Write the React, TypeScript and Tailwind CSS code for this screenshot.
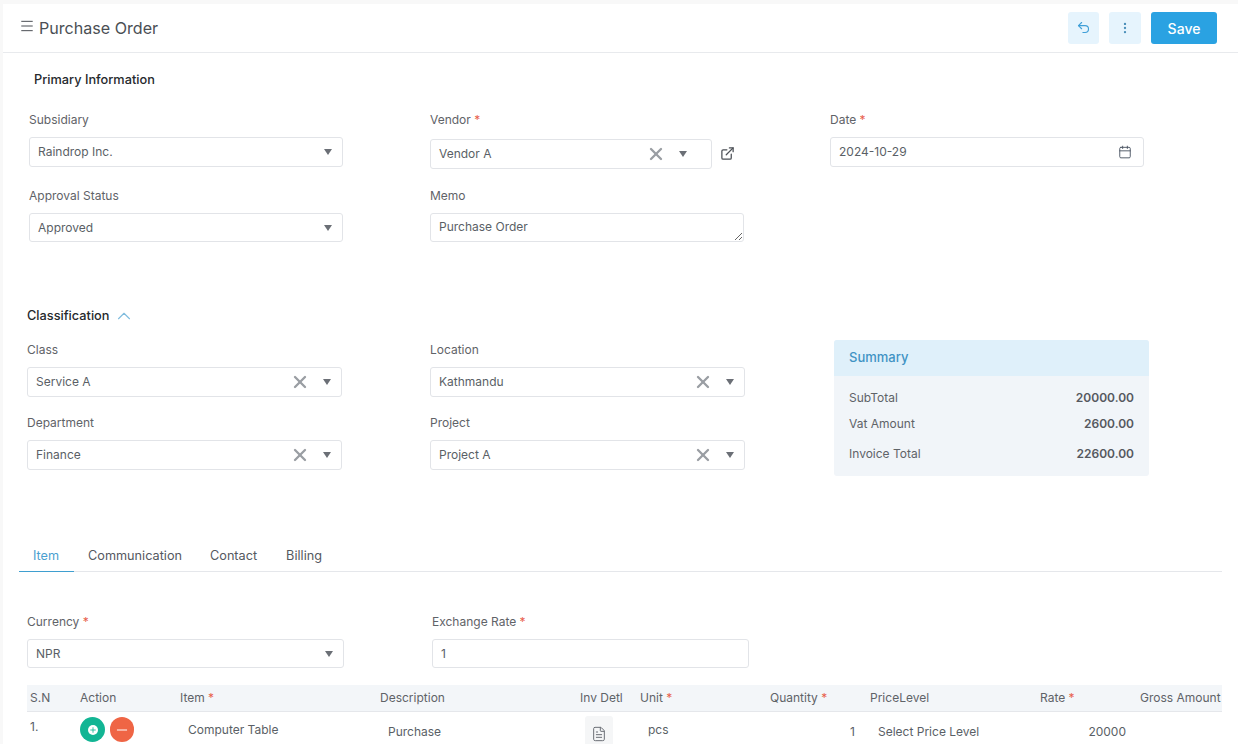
import React from "react";
import { Menu, Undo2, EllipsisVertical, ExternalLink, Calendar, X, ChevronUp, FileText, Plus, Minus } from "lucide-react";

const Req = () => <span className="text-[#e8604c]"> *</span>;

function Label({ text, req }: { text: string; req?: boolean }) {
  return (
    <div className="h-[18px] text-[12px] leading-[18px] text-[#5f6368]">
      {text}
      {req && <Req />}
    </div>
  );
}

function Caret() {
  return <span className="h-0 w-0 border-x-[4px] border-t-[6px] border-x-transparent border-t-[#6b6f76]" />;
}

function Select({ value, clear, cls }: { value: string; clear?: boolean; cls?: string }) {
  return (
    <div className={`flex items-center rounded-[3px] border border-[#e2e4e8] bg-white pl-2 text-[12px] text-[#5a5f66] ${cls ?? "h-[30px] w-full pr-[10px]"}`}>
      <span className="flex-1">{value}</span>
      {clear && <X size={20} strokeWidth={2.8} className="mr-[13px] text-[#9a9ea3]" />}
      <Caret />
    </div>
  );
}

function TH({ children }: { children: React.ReactNode }) {
  return <div className="whitespace-nowrap pl-[3px] text-[12px] text-[#5f6368]">{children}</div>;
}

export default function App() {
  return (
    <div className="h-[744px] w-[1238px] overflow-hidden bg-[#f8f8f8] pl-[3px] pt-1 font-['Inter',sans-serif]">
      <div className="h-[740px] bg-white">
        {/* header */}
        <div className="flex h-[49px] items-center border-b border-[#e8eaed] pl-4 pr-[21px]">
          <Menu size={16} strokeWidth={1.5} className="mb-1 text-[#4b4f55]" />
          <h1 className="ml-1 flex-1 text-[16.1px] text-[#4b4f55]">Purchase Order</h1>
          <button className="flex h-8 w-[31px] items-center justify-center rounded-[3px] bg-[#e6f4fd] text-[#3f9fd8]">
            <Undo2 size={15} strokeWidth={1.8} className="mb-px" />
          </button>
          <button className="ml-[10px] flex h-8 w-8 items-center justify-center rounded-[3px] bg-[#e6f4fd] text-[#4a8fba]">
            <EllipsisVertical size={14} />
          </button>
          <button className="ml-[10px] h-8 w-[66px] rounded-[3px] bg-[#2aa2e2] text-[14px] font-medium text-white">Save</button>
        </div>

        {/* primary */}
        <div className="pl-[31px] pt-[17px] text-[12.75px] font-medium leading-5 text-[#26292d]">Primary Information</div>
        <div className="ml-[26px] mt-[21px] grid grid-cols-[314px_314px_314px] gap-x-[87px]">
          <div>
            <Label text="Subsidiary" />
            <Select value="Raindrop Inc." cls="mt-2 h-[30px] w-full pr-[10px]" />
          </div>
          <div>
            <Label text="Vendor" req />
            <div className="mt-[10px] flex items-center">
              <Select value="Vendor A" clear cls="h-[30px] w-[282px] pr-[24px]" />
              <ExternalLink size={15} strokeWidth={2} className="-mt-px ml-2 text-[#4b4f55]" />
            </div>
          </div>
          <div className="-ml-px mr-px">
            <Label text="Date" req />
            <div className="mt-2 flex h-[30px] items-center justify-between rounded-[3px] border border-[#e2e4e8] pl-2 pr-[11px] text-[12px] text-[#5a5f66]">
              2024-10-29
              <Calendar size={14} strokeWidth={1.6} className="text-[#4b5563]" />
            </div>
          </div>
          <div className="mt-[18px]">
            <Label text="Approval Status" />
            <Select value="Approved" cls="mt-2 h-[29px] w-full pr-[10px]" />
          </div>
          <div className="mt-[18px]">
            <Label text="Memo" />
            <textarea
              readOnly
              value="Purchase Order"
              className="mt-2 block h-[29px] w-full resize-y rounded-[3px] border border-[#e2e4e8] px-2 py-[5px] text-[12px] leading-4 text-[#5a5f66] outline-none"
            />
          </div>
        </div>

        {/* classification */}
        <div className="ml-6 mt-16 flex h-5 items-center text-[12.75px] font-medium text-[#26292d]">
          Classification
          <ChevronUp size={22} strokeWidth={1.2} className="ml-[4px] text-[#7fbcde]" />
        </div>
        <div className="ml-6 mt-[15px] grid grid-cols-[315px_315px_315px] gap-x-[88px]">
          <div className="flex flex-col">
            <Label text="Class" />
            <Select value="Service A" clear cls="mt-2 h-[30px] w-full pr-[10px]" />
            <div className="mt-[17px]"><Label text="Department" /></div>
            <Select value="Finance" clear cls="mt-2 h-[30px] w-full pr-[10px]" />
          </div>
          <div className="flex flex-col">
            <Label text="Location" />
            <Select value="Kathmandu" clear cls="mt-2 h-[30px] w-full pr-[10px]" />
            <div className="mt-[17px]"><Label text="Project" /></div>
            <Select value="Project A" clear cls="mt-2 h-[30px] w-full pr-[10px]" />
          </div>
          <div className="-mr-px -mt-px ml-[1px] h-[136px] overflow-hidden rounded-[3px] bg-[#f1f5f9] text-[12px] text-[#5f6368]">
            <div className="flex h-9 items-center bg-[#dff0fa] pl-[15px] text-[13px] font-medium text-[#3f93c4]">Summary</div>
            <div className="mt-[11px] flex h-[22px] items-center justify-between px-[15px]">
              <span>SubTotal</span><span className="font-semibold text-[#55595f]">20000.00</span>
            </div>
            <div className="mt-1 flex h-[22px] items-center justify-between px-[15px]">
              <span>Vat Amount</span><span className="font-semibold text-[#55595f]">2600.00</span>
            </div>
            <div className="mt-2 flex h-[22px] items-center justify-between px-[15px]">
              <span>Invoice Total</span><span className="font-semibold text-[#55595f]">22600.00</span>
            </div>
          </div>
        </div>

        {/* tabs */}
        <div className="ml-4 mr-4 mt-[63px] flex h-[33px] border-b border-[#e5e7eb] text-[12.7px] leading-5 text-[#55595f]">
          <div className="-mb-px w-[55px] border-b border-[#3f9fd0] pl-[14px] pt-[7px] text-[#4b9fd0]">Item</div>
          <div className="ml-[14px] pt-[7px]">Communication</div>
          <div className="ml-7 pt-[7px]">Contact</div>
          <div className="ml-[29px] pt-[7px]">Billing</div>
        </div>

        {/* currency */}
        <div className="ml-6 mt-[41px] flex">
          <div className="w-[317px]">
            <Label text="Currency" req />
            <Select value="NPR" cls="mt-2 h-[29px] w-full pr-[10px]" />
          </div>
          <div className="ml-[88px] w-[317px]">
            <Label text="Exchange Rate" req />
            <div className="mt-2 flex h-[29px] items-center rounded-[3px] border border-[#e2e4e8] pl-2 text-[12px] text-[#5a5f66]">1</div>
          </div>
        </div>

        {/* table */}
        <div className="ml-6 mt-[17px] w-[1195px] overflow-hidden">
          <div className="grid h-[27px] grid-cols-[50px_100px_200px_200px_60px_130px_100px_170px_100px_85px] items-center border-b border-[#e5e7eb] bg-[#f3f6f9]">
            <TH>S.N</TH>
            <TH>Action</TH>
            <TH>Item<Req /></TH>
            <TH>Description</TH>
            <TH>Inv Detl</TH>
            <TH>Unit<Req /></TH>
            <TH>Quantity<Req /></TH>
            <TH>PriceLevel</TH>
            <TH>Rate<Req /></TH>
            <TH>Gross Amount</TH>
          </div>
          <div className="grid h-[33px] grid-cols-[50px_100px_200px_200px_60px_130px_100px_170px_100px_85px] text-[12px] text-[#5a5f66]">
            <div className="pl-[3px] pt-[7px] leading-4">1.</div>
            <div className="flex gap-[5px] pl-[3px] pt-[5px]">
              <span className="flex h-[25px] w-[25px] items-center justify-center rounded-full bg-[#12b594]">
                <span className="flex h-[10px] w-[10px] items-center justify-center rounded-full bg-white">
                  <Plus size={8} strokeWidth={2.5} className="text-[#12b594]" />
                </span>
              </span>
              <span className="flex h-[25px] w-[24px] items-center justify-center rounded-full bg-[#ef6545]">
                <Minus size={16} strokeWidth={1.5} className="text-white" />
              </span>
            </div>
            <div className="pl-[11px] pt-[10px] leading-4">Computer Table</div>
            <div className="pl-[11px] pt-[12px] leading-4">Purchase</div>
            <div className="pl-[8px] pt-[4px]">
              <span className="flex h-[30px] w-7 items-center justify-center rounded-[3px] bg-[#f5f6f7] pt-[6px]">
                <FileText size={16} strokeWidth={1.5} className="text-[#6b6f76]" />
              </span>
            </div>
            <div className="pl-[11px] pt-[10px] leading-4">pcs</div>
            <div className="pr-[12px] pt-[12px] text-right leading-4">1</div>
            <div className="pl-[11px] pt-[12px] leading-4">Select Price Level</div>
            <div className="pr-[11px] pt-[12px] text-right leading-4">20000</div>
            <div />
          </div>
        </div>
      </div>
    </div>
  );
}
